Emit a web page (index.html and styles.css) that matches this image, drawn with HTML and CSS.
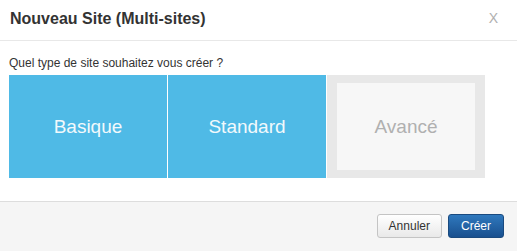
FILE: index.html
```html
<!DOCTYPE html>
<html lang="fr">
<head>
<meta charset="utf-8">
<title>Nouveau Site (Multi-sites)</title>
<link rel="stylesheet" href="styles.css">
</head>
<body>
<div class="modal">
  <div class="modal-header">
    <h3 class="modal-title">Nouveau Site (Multi-sites)</h3>
    <span class="close">X</span>
  </div>
  <div class="modal-body">
    <p class="question">Quel type de site souhaitez vous créer ?</p>
    <div class="tiles">
      <div class="tile tile-active">Basique</div>
      <div class="tile tile-active">Standard</div>
      <div class="tile tile-disabled"><div class="tile-inner">Avancé</div></div>
    </div>
  </div>
  <div class="modal-footer">
    <button class="btn btn-default">Annuler</button>
    <button class="btn btn-primary">Créer</button>
  </div>
</div>
</body>
</html>
```
FILE: styles.css
```css
html, body {
  margin: 0;
  padding: 0;
  background: #ffffff;
}
body {
  font-family: "Liberation Sans", Arial, sans-serif;
  color: #333333;
}
.modal {
  width: 517px;
  height: 251px;
  display: flex;
  flex-direction: column;
  background: #ffffff;
}
.modal-header {
  height: 41px;
  box-sizing: border-box;
  padding: 9px 19px 0 10px;
  border-bottom: 1px solid #e8e8e8;
  display: flex;
  justify-content: space-between;
  align-items: flex-start;
}
.modal-title {
  margin: 0;
  font-size: 16px;
  line-height: 20px;
  font-weight: bold;
  color: #333333;
}
.close {
  font-size: 14px;
  line-height: 20px;
  color: #b0b0b0;
  margin-top: -1px;
}
.modal-body {
  padding: 15px 9px 23px 9px;
}
.question {
  margin: 0 0 5px 0;
  font-size: 12px;
  line-height: 14px;
  color: #333333;
}
.tiles {
  display: flex;
  gap: 1px;
}
.tile {
  width: 158px;
  height: 103px;
  box-sizing: border-box;
  display: flex;
  align-items: center;
  justify-content: center;
  font-size: 19px;
}
.tile-active {
  background: #4fbae6;
  color: #f2f9fc;
}
.tile-disabled {
  background: #e8e8e8;
  padding: 8px 10px;
  align-items: stretch;
  justify-content: stretch;
}
.tile-inner {
  flex: 1;
  background: #f7f7f7;
  color: #b0b0b0;
  display: flex;
  align-items: center;
  justify-content: center;
}
.modal-footer {
  flex: 1;
  border-top: 1px solid #dddddd;
  background: #f5f5f5;
  padding: 12px 13px 0 0;
  display: flex;
  justify-content: flex-end;
  align-items: flex-start;
  gap: 6px;
}
.btn {
  height: 24px;
  box-sizing: border-box;
  padding: 0 11px;
  font-family: "Liberation Sans", Arial, sans-serif;
  font-size: 12px;
  line-height: 22px;
  border-radius: 3px;
  cursor: pointer;
}
.btn-default {
  color: #333333;
  background: linear-gradient(#ffffff, #e9e9e9);
  border: 1px solid #c4c4c4;
}
.btn-primary {
  color: #ffffff;
  background: linear-gradient(#2f78bd, #19508f);
  border: 1px solid #1a4a7f;
  padding: 0 12px;
}
```
